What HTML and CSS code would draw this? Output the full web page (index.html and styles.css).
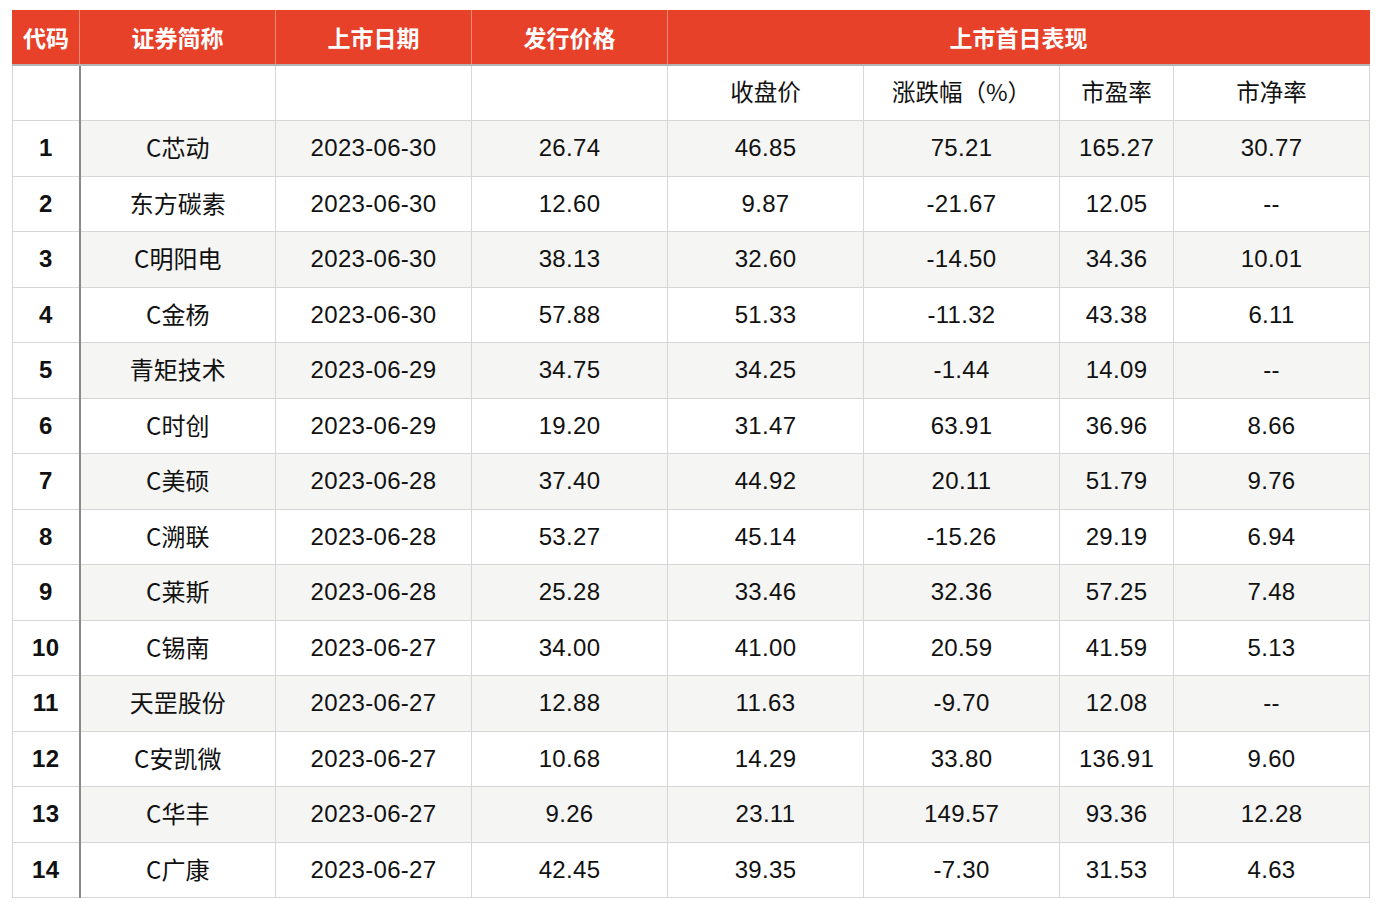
FILE: index.html
```html
<!DOCTYPE html>
<html lang="zh-CN">
<head>
<meta charset="utf-8">
<title>上市首日表现</title>
<link rel="stylesheet" href="styles.css">
</head>
<body>
<table class="ipo">
  <colgroup>
    <col class="c-idx"><col class="c-w"><col class="c-w"><col class="c-w"><col class="c-w"><col class="c-w"><col class="c-n"><col class="c-w">
  </colgroup>
  <thead>
    <tr class="head">
      <th>代码</th><th>证券简称</th><th>上市日期</th><th>发行价格</th><th colspan="4">上市首日表现</th>
    </tr>
    <tr class="sub">
      <td class="idx"></td><td></td><td></td><td></td><td>收盘价</td><td>涨跌幅（%）</td><td>市盈率</td><td>市净率</td>
    </tr>
  </thead>
  <tbody>
    <tr><td class="idx">1</td><td class="name">C芯动</td><td>2023-06-30</td><td>26.74</td><td>46.85</td><td>75.21</td><td>165.27</td><td>30.77</td></tr>
    <tr><td class="idx">2</td><td class="name">东方碳素</td><td>2023-06-30</td><td>12.60</td><td>9.87</td><td>-21.67</td><td>12.05</td><td>--</td></tr>
    <tr><td class="idx">3</td><td class="name">C明阳电</td><td>2023-06-30</td><td>38.13</td><td>32.60</td><td>-14.50</td><td>34.36</td><td>10.01</td></tr>
    <tr><td class="idx">4</td><td class="name">C金杨</td><td>2023-06-30</td><td>57.88</td><td>51.33</td><td>-11.32</td><td>43.38</td><td>6.11</td></tr>
    <tr><td class="idx">5</td><td class="name">青矩技术</td><td>2023-06-29</td><td>34.75</td><td>34.25</td><td>-1.44</td><td>14.09</td><td>--</td></tr>
    <tr><td class="idx">6</td><td class="name">C时创</td><td>2023-06-29</td><td>19.20</td><td>31.47</td><td>63.91</td><td>36.96</td><td>8.66</td></tr>
    <tr><td class="idx">7</td><td class="name">C美硕</td><td>2023-06-28</td><td>37.40</td><td>44.92</td><td>20.11</td><td>51.79</td><td>9.76</td></tr>
    <tr><td class="idx">8</td><td class="name">C溯联</td><td>2023-06-28</td><td>53.27</td><td>45.14</td><td>-15.26</td><td>29.19</td><td>6.94</td></tr>
    <tr><td class="idx">9</td><td class="name">C莱斯</td><td>2023-06-28</td><td>25.28</td><td>33.46</td><td>32.36</td><td>57.25</td><td>7.48</td></tr>
    <tr><td class="idx">10</td><td class="name">C锡南</td><td>2023-06-27</td><td>34.00</td><td>41.00</td><td>20.59</td><td>41.59</td><td>5.13</td></tr>
    <tr><td class="idx">11</td><td class="name">天罡股份</td><td>2023-06-27</td><td>12.88</td><td>11.63</td><td>-9.70</td><td>12.08</td><td>--</td></tr>
    <tr><td class="idx">12</td><td class="name">C安凯微</td><td>2023-06-27</td><td>10.68</td><td>14.29</td><td>33.80</td><td>136.91</td><td>9.60</td></tr>
    <tr><td class="idx">13</td><td class="name">C华丰</td><td>2023-06-27</td><td>9.26</td><td>23.11</td><td>149.57</td><td>93.36</td><td>12.28</td></tr>
    <tr><td class="idx">14</td><td class="name">C广康</td><td>2023-06-27</td><td>42.45</td><td>39.35</td><td>-7.30</td><td>31.53</td><td>4.63</td></tr>
  </tbody>
</table>
</body>
</html>
```
FILE: styles.css
```css
html, body {
  margin: 0;
  padding: 0;
  background: #ffffff;
}
body {
  padding: 10px 0 0 12px;
  font-family: "Liberation Sans", "Noto Sans CJK SC", Arial, sans-serif;
  color: #111111;
}
.ipo {
  border-collapse: collapse;
  table-layout: fixed;
  width: 1357px;
  font-size: 24px;
  line-height: 1;
}
.c-idx { width: 67px; }
.c-w { width: 196px; }
.c-n { width: 114px; }
.ipo th, .ipo td {
  border: 1px solid #d6d6d6;
  text-align: center;
  vertical-align: middle;
  padding: 0;
  white-space: nowrap;
}
.head th {
  height: 53px;
  background: #e8412a;
  color: #ffffff;
  font-family: "Noto Sans CJK SC", sans-serif;
  font-weight: bold;
  font-size: 23px;
  line-height: 1;
  border-color: #ef8a78;
  border-top-color: #e8412a;
  border-bottom: 2px solid #b4b4b4;
}
.head th:first-child { border-left-color: #e8412a; }
.head th:last-child { border-right-color: #e8412a; }
.sub td {
  height: 52px;
  background: #ffffff;
  font-family: "Noto Sans CJK SC", sans-serif;
  font-size: 23.5px;
  padding-bottom: 2px;
}
tbody td {
  height: 54.5px;
  letter-spacing: 0.3px;
}
.ipo td.name {
  height: 52.5px;
  font-family: "Noto Sans CJK SC", sans-serif;
  letter-spacing: 0;
  padding-bottom: 2px;
}
tbody tr:nth-child(odd) td { background: #f5f5f4; }
tbody tr:nth-child(even) td { background: #ffffff; }
.ipo td.idx {
  font-weight: bold;
  border-right: 2px solid #8a8a8a;
  background: #ffffff !important;
}
```
